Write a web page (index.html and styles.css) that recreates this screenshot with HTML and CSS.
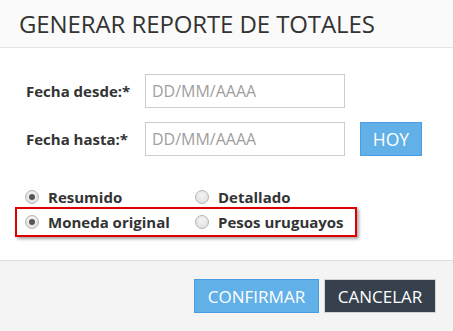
FILE: index.html
```html
<!DOCTYPE html>
<html lang="es">
<head>
<meta charset="utf-8">
<link rel="stylesheet" href="styles.css">
</head>
<body>
<div class="modal">
  <div class="modal-header">
    <h1 class="title">GENERAR REPORTE DE TOTALES</h1>
  </div>
  <div class="modal-body">
    <div class="field-row">
      <label class="field-label">Fecha desde:*</label>
      <input class="date-input" type="text" placeholder="DD/MM/AAAA">
    </div>
    <div class="field-row">
      <label class="field-label">Fecha hasta:*</label>
      <input class="date-input" type="text" placeholder="DD/MM/AAAA">
      <button class="btn btn-primary btn-hoy">HOY</button>
    </div>
    <div class="radio-group">
      <div class="radio-row">
        <span class="radio-item"><span class="radio checked"></span><span class="radio-label">Resumido</span></span>
        <span class="radio-item"><span class="radio"></span><span class="radio-label">Detallado</span></span>
      </div>
      <div class="radio-row highlighted">
        <span class="radio-item"><span class="radio checked"></span><span class="radio-label">Moneda original</span></span>
        <span class="radio-item"><span class="radio"></span><span class="radio-label">Pesos uruguayos</span></span>
      </div>
    </div>
  </div>
  <div class="modal-footer">
    <button class="btn btn-primary btn-footer">CONFIRMAR</button>
    <button class="btn btn-dark btn-footer">CANCELAR</button>
  </div>
</div>
</body>
</html>
```
FILE: styles.css
```css
* { box-sizing: border-box; }
html, body { margin: 0; padding: 0; }
body {
  font-family: "Open Sans", "Noto Sans", sans-serif;
  color: #333;
  background: #fff;
}
.modal {
  width: 453px;
  height: 331px;
  display: flex;
  flex-direction: column;
}
.modal-header {
  height: 48px;
  background: #fafafa;
  border-bottom: 1px solid #e5e5e5;
  padding: 0 0 0 19px;
  display: flex;
  align-items: center;
}
.title {
  margin: 0;
  font-size: 24px;
  font-weight: 400;
  color: #333;
  letter-spacing: -0.1px;
}
.modal-body {
  flex: 1;
  padding: 26px 0 0 26px;
  display: flex;
  flex-direction: column;
  gap: 14px;
}
.field-row {
  display: flex;
  align-items: center;
  height: 34px;
}
.field-label {
  width: 119px;
  font-size: 15px;
  font-weight: 700;
  color: #333;
}
.date-input {
  width: 200px;
  height: 34px;
  border: 1px solid #ccc;
  padding: 0 6px;
  font-family: inherit;
  font-size: 16px;
  color: #555;
  outline: none;
}
.date-input::placeholder { color: #a0a0a0; }
.btn {
  font-family: inherit;
  font-size: 17px;
  color: #fff;
  height: 34px;
  padding: 0;
  cursor: pointer;
}
.btn-primary {
  background: #62b0e8;
  border: 1px solid #4a9de0;
}
.btn-dark {
  background: #36414d;
  border: 1px solid #d4d4d4;
}
.btn-hoy {
  width: 62px;
  margin-left: 15px;
  font-size: 17.5px;
}
.radio-group {
  margin-top: 17px;
  margin-left: -11px;
}
.radio-row {
  display: flex;
  align-items: center;
  height: 20px;
  width: 342px;
  padding-left: 8px;
  border: 2px solid transparent;
}
.radio-row.highlighted {
  border-color: #e00000;
  height: 30px;
  box-shadow: 2px 2px 3px rgba(0, 0, 0, 0.35);
}
.radio-item {
  display: flex;
  align-items: center;
  width: 170px;
  flex: none;
}
.radio {
  width: 14px;
  height: 14px;
  border-radius: 50%;
  border: 1px solid #b4b4b4;
  background: radial-gradient(circle at 50% 35%, #f4f4f4 0%, #dcdcdc 100%);
  margin-right: 9px;
  position: relative;
  flex: none;
}
.radio.checked::after {
  content: "";
  position: absolute;
  left: 3px;
  top: 3px;
  width: 6px;
  height: 6px;
  border-radius: 50%;
  background: #555;
}
.radio-label {
  font-size: 15px;
  font-weight: 700;
  color: #333;
}
.modal-footer {
  height: 71px;
  background: #f4f4f4;
  border-top: 1px solid #ddd;
  display: flex;
  justify-content: flex-end;
  align-items: center;
  padding: 0 17px 0 0;
  gap: 5px;
}
.btn-footer {
  height: 34px;
}
.btn-footer.btn-primary { width: 125px; }
.btn-footer.btn-dark { width: 112px; }
```
